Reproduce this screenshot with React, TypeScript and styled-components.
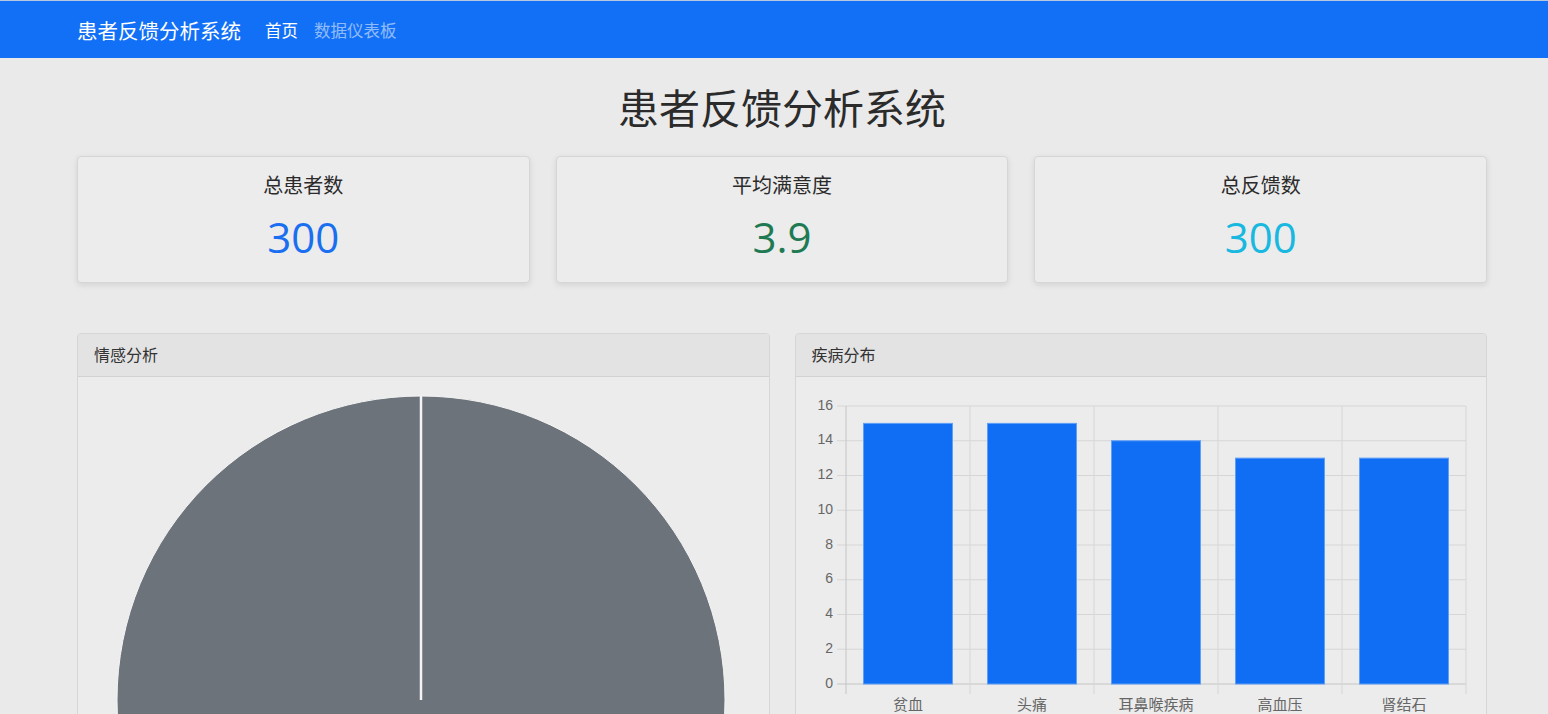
import styled, { createGlobalStyle } from 'styled-components';

const GlobalStyle = createGlobalStyle`
    * {
        box-sizing: border-box;
    }
    body {
        margin: 0;
        background: #eaeaea;
        font-family: "Open Sans", "Noto Sans CJK SC", sans-serif;
        color: #2b2b2b;
    }
`;

const Navbar = styled.nav`
    height: 58px;
    background: #1270f7;
    border-top: 1px solid #b7c7e2;
    display: flex;
    align-items: center;
`;

const NavInner = styled.div`
    width: 1410px;
    margin-left: 77px;
    display: flex;
    align-items: center;
`;

const Brand = styled.span`
    font-size: 20.5px;
    color: #ffffff;
    margin-right: 16px;
    white-space: nowrap;
`;

const NavLink = styled.span<{ $active?: boolean }>`
    font-size: 16.5px;
    padding: 0 8px;
    color: ${p => (p.$active ? '#ffffff' : 'rgba(255, 255, 255, 0.55)')};
`;

const Main = styled.main`
    width: 1410px;
    margin-left: 77px;
`;

const Title = styled.h1`
    margin: 26px 0 24px;
    font-size: 41px;
    font-weight: 400;
    line-height: 48px;
    text-align: center;
    color: #2b2b2b;
`;

const StatRow = styled.div`
    display: grid;
    grid-template-columns: repeat(3, 1fr);
    gap: 26px;
`;

const StatCard = styled.div`
    background: #ececec;
    border: 1px solid #d6d6d6;
    border-radius: 4px;
    box-shadow: 0 2px 6px rgba(0, 0, 0, 0.1);
    padding: 15px 16px 21px;
    text-align: center;
`;

const StatLabel = styled.div`
    font-size: 20px;
    line-height: 28px;
    margin-bottom: 13px;
    color: #2b2b2b;
`;

const StatValue = styled.div<{ $color: string }>`
    font-size: 42px;
    line-height: 48px;
    color: ${p => p.$color};
`;

const ChartRow = styled.div`
    display: grid;
    grid-template-columns: 1fr 1fr;
    gap: 25px;
    margin-top: 50px;
    align-items: start;
`;

const ChartCard = styled.div`
    background: #ececec;
    border: 1px solid #d6d6d6;
    border-radius: 4px;
    overflow: hidden;
`;

const ChartHeader = styled.div`
    background: #e3e3e3;
    border-bottom: 1px solid #d2d2d2;
    padding: 9px 16px;
    font-size: 16px;
    line-height: 24px;
    color: #333333;
`;

const ChartBody = styled.div<{ $padRight?: number }>`
    padding: 18px ${p => p.$padRight ?? 16}px 16px 16px;
    display: flex;
    justify-content: ${p => (p.$padRight ? 'center' : 'flex-start')};
`;

const AxisText = styled.text`
    font-family: "Liberation Sans", "Noto Sans CJK SC", sans-serif;
    fill: #666666;
`;

const stats = [
    { label: '总患者数', value: '300', color: '#1a6ff0' },
    { label: '平均满意度', value: '3.9', color: '#1f7a54' },
    { label: '总反馈数', value: '300', color: '#19b8e0' },
];

const diseases = [
    { name: '贫血', count: 15 },
    { name: '头痛', count: 15 },
    { name: '耳鼻喉疾病', count: 14 },
    { name: '高血压', count: 13 },
    { name: '肾结石', count: 13 },
];

const PieChart = () => (
    <svg width="610" height="610" viewBox="0 0 610 610">
        <circle cx="305" cy="305" r="304" fill="#6c737b" stroke="#f4f4f4" strokeWidth="1" />
        <line x1="305" y1="1" x2="305" y2="305" stroke="#f4f4f4" strokeWidth="2.5" />
    </svg>
);

const BarChart = () => {
    const left = 34;
    const right = 654;
    const top = 11;
    const zero = 289;
    const unit = (zero - top) / 16;
    const cat = (right - left) / diseases.length;
    const barW = 89;
    const ticks = [0, 2, 4, 6, 8, 10, 12, 14, 16];
    return (
        <svg width="658" height="330" viewBox="0 0 658 330">
            {ticks.map(t => {
                const y = zero - t * unit;
                return (
                    <g key={t}>
                        <line x1={25} x2={right} y1={y} y2={y} stroke={t === 0 ? '#c4c4c4' : '#d6d6d6'} strokeWidth="1" />
                        <AxisText x={21} y={y} fontSize="14" textAnchor="end" dominantBaseline="middle">
                            {t}
                        </AxisText>
                    </g>
                );
            })}
            {diseases.map((_, i) => (
                <line key={i} x1={left + i * cat} x2={left + i * cat} y1={top} y2={zero + 10} stroke={i === 0 ? '#c4c4c4' : '#d6d6d6'} strokeWidth="1" />
            ))}
            <line x1={right} x2={right} y1={top} y2={zero + 10} stroke="#d6d6d6" strokeWidth="1" />
            {diseases.map((d, i) => {
                const x = left + i * cat + (cat - barW) / 2;
                const h = d.count * unit;
                return (
                    <g key={d.name}>
                        <rect x={x} y={zero - h} width={barW} height={h} fill="#106ef5" stroke="#5f9ff7" strokeWidth="1" />
                        <AxisText x={left + i * cat + cat / 2} y={311} fontSize="15" textAnchor="middle" dominantBaseline="middle">
                            {d.name}
                        </AxisText>
                    </g>
                );
            })}
        </svg>
    );
};

export default function App() {
    return (
        <>
            <GlobalStyle />
            <Navbar>
                <NavInner>
                    <Brand>患者反馈分析系统</Brand>
                    <NavLink $active>首页</NavLink>
                    <NavLink>数据仪表板</NavLink>
                </NavInner>
            </Navbar>
            <Main>
                <Title>患者反馈分析系统</Title>
                <StatRow>
                    {stats.map(s => (
                        <StatCard key={s.label}>
                            <StatLabel>{s.label}</StatLabel>
                            <StatValue $color={s.color}>{s.value}</StatValue>
                        </StatCard>
                    ))}
                </StatRow>
                <ChartRow>
                    <ChartCard>
                        <ChartHeader>情感分析</ChartHeader>
                        <ChartBody $padRight={20}>
                            <PieChart />
                        </ChartBody>
                    </ChartCard>
                    <ChartCard>
                        <ChartHeader>疾病分布</ChartHeader>
                        <ChartBody>
                            <BarChart />
                        </ChartBody>
                    </ChartCard>
                </ChartRow>
            </Main>
        </>
    );
}
